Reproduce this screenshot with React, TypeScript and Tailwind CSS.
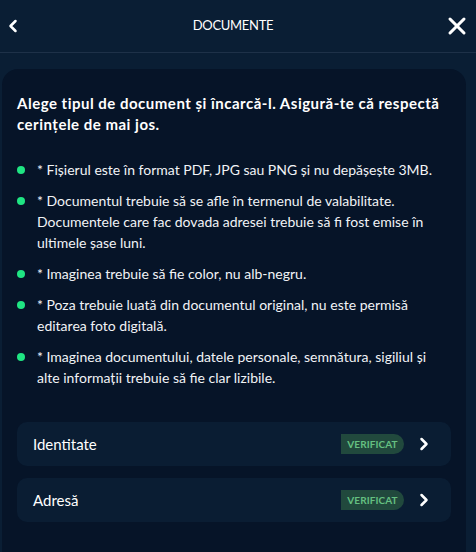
import { ChevronLeft, ChevronRight, X } from 'lucide-react'

const rules = [
  '* Fișierul este în format PDF, JPG sau PNG și nu depășește 3MB.',
  '* Documentul trebuie să se afle în termenul de valabilitate. Documentele care fac dovada adresei trebuie să fi fost emise în ultimele șase luni.',
  '* Imaginea trebuie să fie color, nu alb-negru.',
  '* Poza trebuie luată din documentul original, nu este permisă editarea foto digitală.',
  '* Imaginea documentului, datele personale, semnătura, sigiliul și alte informații trebuie să fie clar lizibile.',
]

const docs = ['Identitate', 'Adresă']

export default function App() {
  return (
    <div className="w-[476px] h-[552px] overflow-hidden bg-[#0a1e34] text-white font-['Lato','Liberation_Sans',sans-serif]">
      <div className="h-[53px] flex items-center justify-between pl-[3px] pr-[5px] border-b border-[#1e3148]">
        <ChevronLeft className="w-[20px] h-[20px]" strokeWidth={3} />
        <span className="text-[13px] tracking-[-0.3px]">DOCUMENTE</span>
        <X className="w-[28px] h-[28px]" strokeWidth={2.6} />
      </div>

      <div className="mt-[16px] ml-[2px] w-[464px] h-[500px] rounded-t-[16px] bg-[#061428] px-[15px] pt-[24px]">
        <p className="text-[15px] font-bold leading-[21px] tracking-[0.5px]">
          Alege tipul de document și încarcă-l. Asigură-te că respectă cerințele de mai jos.
        </p>

        <ul className="mt-[24px] flex flex-col gap-[10px]">
          {rules.map((r) => (
            <li key={r} className="flex gap-[12px] text-[14px] leading-[21px] text-[#f1f3f6]">
              <span className="mt-[7px] w-[8px] h-[8px] shrink-0 rounded-full bg-[#1fe583]" />
              <span>{r}</span>
            </li>
          ))}
        </ul>

        <div className="mt-[34px] flex flex-col gap-[12px]">
          {docs.map((d) => (
            <div
              key={d}
              className="h-[44px] rounded-[10px] bg-[#0a1d33] flex items-center pl-[16px] pr-[17px]"
            >
              <span className="text-[15px] flex-1">{d}</span>
              <span className="h-[20px] w-[63px] flex items-center justify-center rounded-l-[4px] rounded-r-full bg-[#21493d] text-[#65c081] text-[10px] font-bold tracking-[0.1px]">
                VERIFICAT
              </span>
              <ChevronRight className="ml-[10px] w-[20px] h-[20px]" strokeWidth={3} />
            </div>
          ))}
        </div>
      </div>
    </div>
  )
}
